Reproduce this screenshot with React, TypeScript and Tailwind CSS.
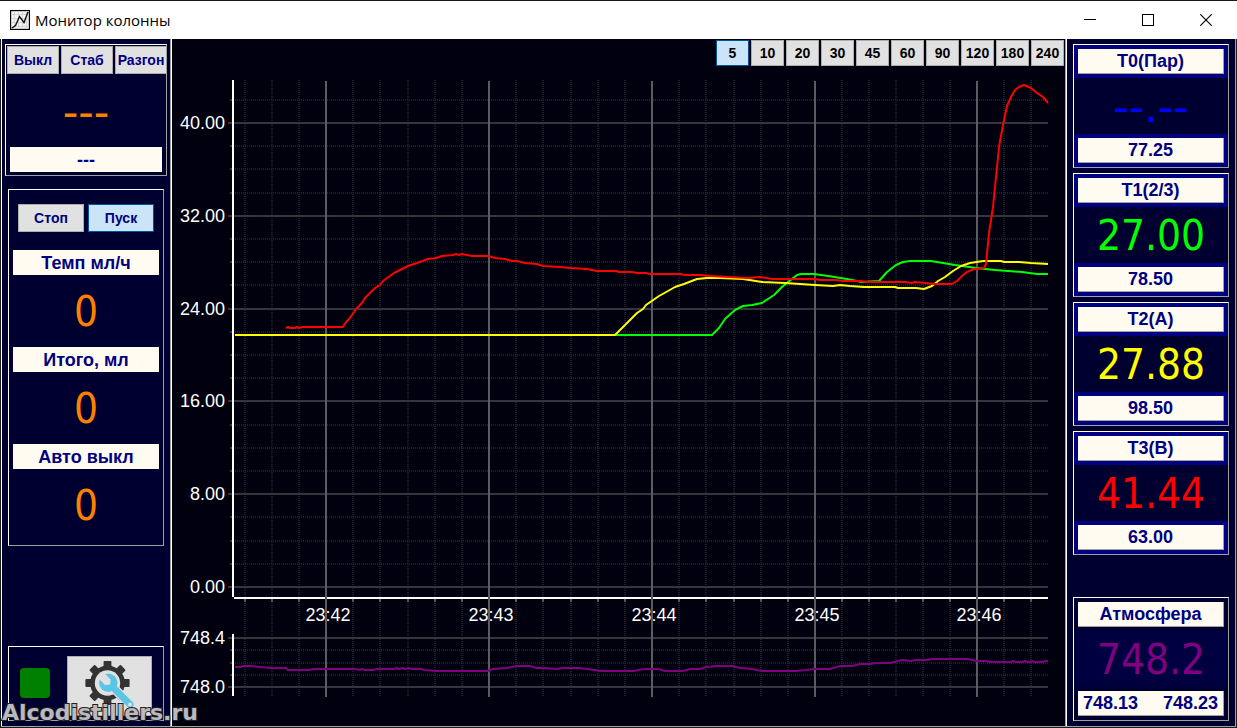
import React, { useState } from "react";

const BEVEL = "border border-t-white border-l-white border-r-[#a0a0a0] border-b-[#a0a0a0]";
const LABEL_BOX = "flex h-[25px] items-center justify-center bg-[#fffbf0] text-[18px] leading-[24px] font-bold text-[#000080]";
const DIGITS = "font-['DejaVu_Sans_Condensed','DejaVu_Sans',sans-serif] text-[42px] leading-[58px]";
const DASHES = "font-['DejaVu_Sans',sans-serif] text-[43px] leading-[58px]";

const IDLE_BUTTON = "border-[#adadad] bg-[#e1e1e1]";
const ACTIVE_BUTTON = "border-[#005499] bg-[#cce4f7]";

function ChartIcon() {
  return (
    <svg width="20" height="20" viewBox="0 0 20 20" aria-hidden="true">
      <rect x=".5" y=".5" width="19" height="19" fill="#f4f4f4" stroke="#000" strokeWidth="1.4" />
      <path d="M4.5 1V19M8.5 1V19M12.5 1V19M16.5 1V19M1 4.5H19M1 8.5H19M1 12.5H19M1 16.5H19" stroke="#d4d4d4" fill="none" />
      <path d="M2 18L5.5 15.5L9.5 6.5L14 12.5L18 2" stroke="#111" strokeWidth="1.4" fill="none" />
    </svg>
  );
}

function TitleBar() {
  return (
    <header className="flex h-[39px] shrink-0 items-center border-t border-[#1a1a1a] bg-white pl-[10px] pr-[2px] text-black">
      <ChartIcon />
      <h1 className="ml-[5px] flex-1 font-['Open_Sans',sans-serif] text-[15px] leading-[20px] font-normal">Монитор колонны</h1>
      <button type="button" aria-label="Свернуть" className="flex h-full w-[58px] items-center justify-center">
        <svg width="12" height="12" viewBox="0 0 12 12" shapeRendering="crispEdges"><path d="M0 5.5H12" stroke="#000" /></svg>
      </button>
      <button type="button" aria-label="Развернуть" className="flex h-full w-[58px] items-center justify-center">
        <svg width="12" height="12" viewBox="0 0 12 12" shapeRendering="crispEdges"><rect x=".5" y=".5" width="11" height="11" fill="none" stroke="#000" /></svg>
      </button>
      <button type="button" aria-label="Закрыть" className="flex h-full w-[58px] items-center justify-center">
        <svg width="12" height="12" viewBox="0 0 12 12"><path d="M.3 .3L11.7 11.7M11.7 .3L.3 11.7" stroke="#000" strokeWidth="1.1" /></svg>
      </button>
    </header>
  );
}

function GearIcon() {
  return (
    <svg width="50" height="50" viewBox="0 0 50 50" aria-hidden="true">
      <g fill="#333">
        {[0, 45, 90, 135, 180, 225, 270, 315].map((a) => (
          <path key={a} d="M18.6 6V.9Q18.6 -.1 19.6 -.1H25.4Q26.4 -.1 26.4 .9V6Z" transform={`rotate(${a} 22.5 22)`} />
        ))}
        <circle cx="22.5" cy="22" r="17.4" />
      </g>
      <circle cx="22.5" cy="22" r="12.7" fill="#e1e1e1" />
      <path d="M26 24.4L45 43.4" stroke="#e1e1e1" strokeWidth="9.5" strokeLinecap="round" />
      <path d="M25 23.4L45 43.4" stroke="#5bc5e5" strokeWidth="7" strokeLinecap="round" />
      <circle cx="23.3" cy="21.7" r="9.2" fill="#5bc5e5" />
      <path d="M19.3 9.7H27.3V21L23.3 24.2L19.3 21Z" fill="#e1e1e1" transform="rotate(-45 23.3 21.7)" />
      <circle cx="45" cy="43.4" r="1.9" fill="#e1e1e1" />
    </svg>
  );
}

const counters = [
  { title: "Темп мл/ч", value: "0" },
  { title: "Итого, мл", value: "0" },
  { title: "Авто выкл", value: "0" },
];

function LeftPanel() {
  const [running, setRunning] = useState(true);
  return (
    <aside className="flex w-[170px] shrink-0 flex-col border-r border-l border-r-[#a0a0a0] border-l-white bg-[#000030] pt-[5px] text-[#000080]">
      <section className={`mr-[3px] ml-[3px] h-[132px] overflow-hidden ${BEVEL}`}>
        <div className="flex gap-[2px] pt-px pl-px">
          {["Выкл", "Стаб", "Разгон"].map((name) => (
            <button key={name} type="button" className={`h-[28px] w-[52px] shrink-0 border text-[14px] font-bold whitespace-nowrap ${IDLE_BUTTON}`}>
              {name}
            </button>
          ))}
        </div>
        <div className={`h-[73px] pt-[9px] text-center text-[#ff8000] ${DASHES}`}>---</div>
        <div className={`mx-[4px] ${LABEL_BOX}`}>---</div>
      </section>

      <section className={`mx-[6px] mt-[13px] h-[357px] px-[4px] ${BEVEL}`}>
        <div className="flex justify-center gap-[4px] pt-[14px] pb-[18px]">
          <button type="button" onClick={() => setRunning(false)} className={`h-[28px] w-[66px] border text-[14px] font-bold ${running ? IDLE_BUTTON : ACTIVE_BUTTON}`}>
            Стоп
          </button>
          <button type="button" onClick={() => setRunning(true)} className={`h-[28px] w-[66px] border text-[14px] font-bold ${running ? ACTIVE_BUTTON : IDLE_BUTTON}`}>
            Пуск
          </button>
        </div>
        {counters.map((c) => (
          <div key={c.title}>
            <h2 className={LABEL_BOX}>{c.title}</h2>
            <div className={`h-[72px] pt-[8px] text-center text-[#ff8000] ${DIGITS}`}>{c.value}</div>
          </div>
        ))}
      </section>

      <section className={`mx-[6px] mt-auto mb-[5px] flex h-[75px] items-start pt-[9px] ${BEVEL}`}>
        <span className="mt-[12px] ml-[11px] h-[30px] w-[30px] rounded-[4px] bg-[#008000]" />
        <button type="button" aria-label="Настройки" className={`ml-[17px] flex h-[60px] w-[85px] items-center justify-center border ${IDLE_BUTTON}`}>
          <GearIcon />
        </button>
      </section>
    </aside>
  );
}

const AXIS_TOP = 123;
const minuteMarks = [
  { x: 326, label: "23:42" },
  { x: 489, label: "23:43" },
  { x: 652, label: "23:44" },
  { x: 815, label: "23:45" },
  { x: 977, label: "23:46" },
];
const minorX = [245, 272, 299, 353, 380, 408, 435, 462, 516, 543, 571, 598, 625, 679, 706, 734, 761, 788, 842, 869, 896, 923, 950, 1004, 1031];
const majorY = ["40.00", "32.00", "24.00", "16.00", "8.00", "0.00"].map((label, i) => ({ label, y: Math.round(AXIS_TOP + i * 92.8) }));
const minorY = [-1, 1, 2, 3, 5, 6, 7, 9, 10, 11, 13, 14, 15, 17, 18, 19].map((i) => Math.round(AXIS_TOP + i * 23.2));
const pressureY = [
  { label: "748.4", y: 638 },
  { label: "748.0", y: 687 },
];
const pressureMinorY = [650, 663, 675];

const GREEN =
  "235,335 712,335 719,328 725,319 735,310 743,306 752,305 762,303 774,295 782,287 788,282 797,275 801,274 814,274 828,276 847,279 862,282 879,281 887,272 896,265 903,262 910,261 931,261 943,263 955,265 976,268 995,270 1008,271 1022,272 1037,274 1048,274";
const YELLOW =
  "235,335 615,335 625,325 637,313 643,309 646,305 659,296 668,291 675,287 684,284 697,279 707,278 720,278 743,279 762,282 785,283 800,284 815,285 833,286 840,285 850,286 864,287 895,287 898,288 916,288 924,289 932,286 938,281 945,277 953,271 961,266 970,263 983,261 1001,261 1004,262 1019,262 1031,263 1048,264";
const RED =
  "286,328 288,327 290,328 295,328 297,327 299,328 302,327 343,327 346,322 349,319 357,308 362,303 365,298 375,288 380,285 383,281 394,273 408,266 417,263 428,259 436,258 442,256 453,255 456,254 459,255 462,254 472,256 488,256 495,258 505,259 512,261 517,261 525,263 537,264 543,266 560,267 571,268 587,269 597,271 616,271 619,272 632,272 637,273 646,273 650,274 665,274 680,274 685,275 700,275 710,276 730,277 747,278 760,277 772,279 785,279 815,279 820,280 835,280 843,281 860,281 867,282 905,282 912,283 915,282 925,283 935,284 952,284 957,281 962,276 967,272 974,269 984,268 986,264 989,233 993,207 995,187 997,167 999,147 1003,125 1007,106 1011,97 1015,90 1019,87 1024,85 1031,88 1037,93 1043,97 1048,103";
const PURPLE =
  "235,667 240,667 243,666 251,666 260,667 272,668 286,668 288,670 310,670 313,669 356,669 359,670 362,669 365,670 373,670 377,669 394,669 397,668 399,669 403,668 405,669 409,668 412,669 421,669 425,670 437,671 488,671 493,669 507,668 517,666 530,666 537,668 544,668 556,669 562,668 579,668 595,670 600,671 634,671 638,670 645,669 658,669 665,671 683,671 690,669 700,669 706,667 717,666 732,666 740,668 752,669 762,671 795,671 806,670 814,669 830,669 840,666 852,666 860,664 870,664 875,663 890,663 902,660 911,661 916,660 927,660 932,659 968,659 976,661 987,661 989,662 1011,662 1013,661 1016,662 1022,662 1025,661 1027,662 1030,662 1032,661 1034,662 1042,662 1045,661 1048,661";

function Plot() {
  return (
    <svg viewBox="172 67 893 659" className="block h-auto w-full font-['Liberation_Sans',Arial,sans-serif] text-[18px]" role="img" aria-label="График температур">
      <g fill="#fff">
        {[...majorY, ...pressureY].map((m) => (
          <text key={m.label} x="225" y={m.y + 6} textAnchor="end">{m.label}</text>
        ))}
        {minuteMarks.map((m) => (
          <text key={m.label} x={m.x + 2} y="621" textAnchor="middle">{m.label}</text>
        ))}
      </g>
      <g shapeRendering="crispEdges" fill="none">
        <g stroke="#1d1d27" strokeWidth="2" strokeDasharray="1 1">
          {[...minorY, ...pressureMinorY].map((y) => <path key={y} d={`M235 ${y}H1048`} />)}
          {minorX.map((x) => <path key={x} d={`M${x} 80V597M${x} 601V696`} />)}
        </g>
        <path d={[...majorY, ...pressureY].map((m) => `M228 ${m.y}H1048`).join("")} stroke="#35353d" strokeWidth="2" />
        <path d={[...minorY, ...pressureMinorY].map((y) => `M230 ${y}H233`).join("")} stroke="#35353d" strokeWidth="2" />
        <path d="M233 80V597M233 634V696M234 598H1048" stroke="#fff" strokeWidth="2" />
        <path d={minorX.map((x) => `M${x} 599V602`).join("")} stroke="#55555c" strokeWidth="2" />
        <path d={minuteMarks.map((m) => `M${m.x} 81V697`).join("")} stroke="#5b5b62" strokeWidth="2" />
      </g>
      <g fill="none" strokeWidth="2" strokeLinejoin="round">
        <polyline points={GREEN} stroke="#0f0" />
        <polyline points={YELLOW} stroke="#ff0" />
        <polyline points={RED} stroke="#f00" />
        <polyline points={PURPLE} stroke="#800080" />
      </g>
    </svg>
  );
}

const ranges = [5, 10, 20, 30, 45, 60, 90, 120, 180, 240];

function ChartPanel() {
  const [range, setRange] = useState(5);
  return (
    <main className="min-w-0 flex-1 border-r border-l border-r-[#a0a0a0] border-l-white bg-[#00000f]">
      <div className="flex h-[28px] justify-end gap-[2px] pt-px pr-px">
        {ranges.map((r) => (
          <button
            key={r}
            type="button"
            onClick={() => setRange(r)}
            className={`h-[26px] w-[33px] border text-[14px] font-bold text-black ${r === range ? ACTIVE_BUTTON : IDLE_BUTTON}`}
          >
            {r}
          </button>
        ))}
      </div>
      <Plot />
    </main>
  );
}

const sensors = [
  { title: "T0(Пар)", value: "--.--", limit: "77.25", color: "text-[#0000ff]", font: DASHES },
  { title: "T1(2/3)", value: "27.00", limit: "78.50", color: "text-[#00ff00]", font: DIGITS },
  { title: "T2(A)", value: "27.88", limit: "98.50", color: "text-[#ffff00]", font: DIGITS },
  { title: "T3(B)", value: "41.44", limit: "63.00", color: "text-[#ff0000]", font: DIGITS },
];

const CARD_BOX = `mx-[4px] border-r border-b border-[#a0a0a0] ${LABEL_BOX}`;

function RightPanel() {
  return (
    <aside className="flex w-[170px] shrink-0 flex-col gap-[5px] border-r border-l border-r-[#a0a0a0] border-l-white bg-[#000030] px-[6px] py-[5px]">
      {sensors.map((s) => (
        <section key={s.title} className={`flex flex-col gap-[4px] bg-[#000080] py-[4px] ${BEVEL}`}>
          <h2 className={CARD_BOX}>{s.title}</h2>
          <div className={`h-[56px] bg-[#000030] text-center ${s.font} ${s.color}`}>{s.value}</div>
          <div className={CARD_BOX}>{s.limit}</div>
        </section>
      ))}
      <section className={`mt-auto flex flex-col gap-[4px] py-[4px] ${BEVEL}`}>
        <h2 className={CARD_BOX}>Атмосфера</h2>
        <div className={`h-[56px] bg-[#000040] text-center text-[#800080] ${DIGITS}`}>748.2</div>
        <div className="mx-[4px] flex h-[25px] items-center justify-between border-r border-b border-[#a0a0a0] bg-[#fffbf0] px-[5px] text-[18px] leading-[24px] font-bold text-[#000080]">
          <span>748.13</span>
          <span>748.23</span>
        </div>
      </section>
    </aside>
  );
}

export default function App() {
  return (
    <div className="relative flex min-h-screen flex-col bg-[#1a1a1a] font-['Liberation_Sans',Arial,sans-serif]">
      <TitleBar />
      <div className="mx-px mb-px flex flex-1 border-b border-[#a0a0a0]">
        <LeftPanel />
        <ChartPanel />
        <RightPanel />
      </div>
      <div className="pointer-events-none absolute bottom-0 left-[2px] font-['DejaVu_Sans',sans-serif] text-[22px] leading-[30px] font-bold text-[#b9b9bf] [paint-order:stroke_fill] [-webkit-text-stroke:2px_#222]">
        Alcodistillers.ru
      </div>
    </div>
  );
}
